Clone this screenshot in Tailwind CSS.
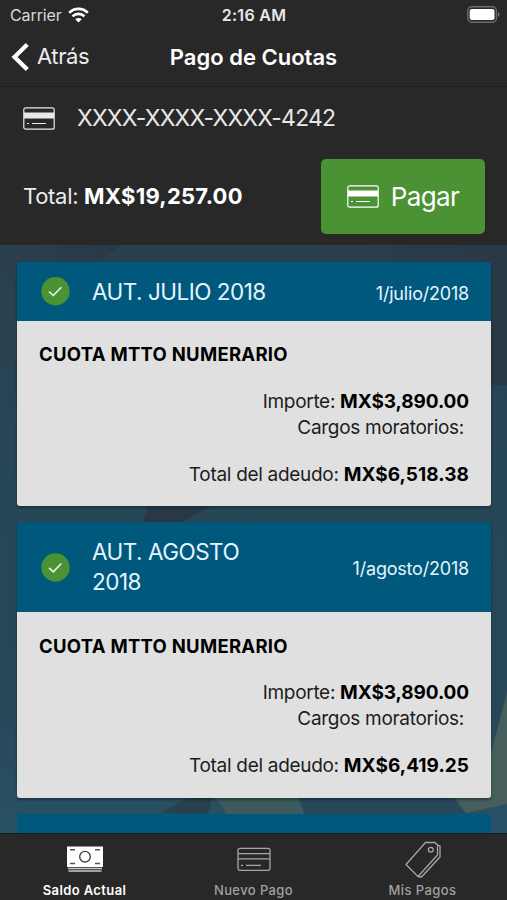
<!DOCTYPE html>
<html lang="es">
<head>
    <meta charset="UTF-8">
    <meta name="viewport" content="width=device-width, initial-scale=1.0">
    <title>Pago de Cuotas</title>
    <script src="https://cdn.jsdelivr.net/npm/@tailwindcss/browser@4"></script>
</head>
<body class="bg-[#282828] font-['Inter','Liberation_Sans',sans-serif] text-white">
    <!-- Shared icon -->
    <svg class="hidden">
        <symbol id="card" viewBox="0 0 32 23">
            <rect x="0.8" y="0.8" width="30.4" height="21.4" rx="2" fill="none" stroke="currentColor" stroke-width="1.2"/>
            <path d="M1 5.5h30v6H1z" fill="currentColor"/>
            <path d="M4 16.5h2M9 16.5h14" stroke="currentColor" stroke-width="1.2"/>
        </symbol>
    </svg>

    <div class="flex flex-col h-[900px] w-[507px] overflow-hidden">
        <!-- Status bar -->
        <div class="grid grid-cols-3 items-center h-[29px] shrink-0 pl-2.5 pr-[7px] text-[16px]">
            <div class="flex items-center gap-[6px] text-[#d8d8d8]">
                <span class="tracking-[-0.1px]">Carrier</span>
                <svg class="w-[21px] h-[16px]" viewBox="0 0 21 16" fill="none" stroke="#fff" stroke-width="2.7">
                    <path d="M1.2 5.8a13.2 13.2 0 0 1 18.6 0M4.5 9.4a8.5 8.5 0 0 1 12 0"/>
                    <path d="M10.5 15.5l-3.2-3.2a4.5 4.5 0 0 1 6.4 0z" fill="#fff" stroke="none"/>
                </svg>
            </div>
            <div class="pt-px pr-[2px] text-center font-semibold text-[16px] tracking-[0.3px] whitespace-nowrap text-[#e8e8e8]">2:16 AM</div>
            <svg class="w-[33px] h-[17px] justify-self-end" viewBox="0 0 33 17">
                <rect x="0.8" y="0.8" width="28.6" height="15.4" rx="4" fill="none" stroke="#6c6c6c" stroke-width="1.4"/>
                <rect x="2.7" y="2.9" width="24.8" height="11.2" rx="2" fill="#fff"/>
                <path d="M31 6q1.5 1 1.5 2.5T31 11z" fill="#777"/>
            </svg>
        </div>

        <!-- Nav bar -->
        <header class="grid grid-cols-[150px_1fr_150px] items-center h-[58px] shrink-0 border-b border-[#1f1f1f]">
            <a href="#" class="flex items-center gap-[8px] pl-[11px] pb-[2px] text-[22px]">
                <svg class="w-[18px] h-[28px]" viewBox="0 0 18 28" fill="none" stroke="#fff" stroke-width="4.2">
                    <path d="M16.3 1.5L3.5 14l12.8 12.5"/>
                </svg>
                <span class="tracking-[-0.4px] text-[#ececec]">Atrás</span>
            </a>
            <h1 class="text-center font-semibold text-[22px] whitespace-nowrap">Pago de Cuotas</h1>
        </header>

        <!-- Payment summary -->
        <section class="h-[158px] shrink-0">
            <div class="flex items-center h-[62px] pl-[23px] gap-[22px] text-[#e8e8e8]">
                <svg class="w-[32px] h-[23px]"><use href="#card"/></svg>
                <span class="text-[23px] tracking-[-0.8px]">XXXX-XXXX-XXXX-4242</span>
            </div>
            <div class="flex items-center justify-between h-[96px] pl-[23px] pr-[22px] pb-[2px]">
                <p class="text-[22px] tracking-[-0.3px] text-[#ececec]">Total: <strong class="font-bold tracking-[0.25px] text-white">MX$19,257.00</strong></p>
                <button class="flex items-center justify-center gap-[12px] w-[164px] h-[75px] rounded-[5px] bg-[#4a9234] text-[26px] tracking-[-0.6px]">
                    <svg class="w-[32px] h-[23px]"><use href="#card"/></svg>
                    <span>Pagar</span>
                </button>
            </div>
        </section>

        <!-- Fee list over a faceted backdrop -->
        <main class="relative grow min-h-0 overflow-hidden">
            <svg class="absolute inset-0 w-[507px] h-[589px]" viewBox="0 0 507 589">
                <defs>
                    <linearGradient id="bg" x2="0" y2="1">
                        <stop offset="0" stop-color="#2a3f4e"/>
                        <stop offset="0.4" stop-color="#274757"/>
                        <stop offset="0.8" stop-color="#28485a"/>
                        <stop offset="1" stop-color="#285264"/>
                    </linearGradient>
                    <linearGradient id="facet">
                        <stop offset="0" stop-color="#2a3b49" stop-opacity="0"/>
                        <stop offset="1" stop-color="#293845"/>
                    </linearGradient>
                </defs>
                <path d="M0 0h507v589H0z" fill="url(#bg)"/>
                <path d="M20 0h100L100 17H0z" fill="url(#facet)"/>
                <path d="M300 0h207v140h-40z" fill="url(#facet)"/>
                <path d="M148 262h62l-30 16h-37z" fill="#283845"/>
                <path d="M160 568l30-16h22l-4 18z" fill="#27414f"/>
                <path d="M216 552h82l7 18h-78z" fill="#3d5b5d"/>
                <path d="M298 552h155l13 18H305z" fill="#28485a"/>
                <path d="M466 568l41-9v30h-41z" fill="#285066"/>
                <path d="M507 447v112l-41 9-12-16h19l18-44z" fill="#465f5c"/>
            </svg>
            <div class="relative flex flex-col gap-4 pt-[17px] pl-[17px] pr-4">
                <article class="rounded-[3px] text-[#1d1d1d] shadow-[0_2px_3px_rgba(0,0,0,0.35)]">
                    <div class="flex items-center h-[59px] pl-6 pr-[22px] rounded-t-[3px] bg-[#00587c] text-[#e4f4ff]">
                        <svg class="w-[29px] h-[29px]" viewBox="0 0 29 29"><circle cx="14.5" cy="14.2" r="14.2" fill="#4a9234"/><path d="M8 14.5l4.3 4L20.3 10.2" fill="none" stroke="#e9f7e9" stroke-width="1.6"/></svg>
                        <h2 class="w-[190px] ml-[22px] text-[22.5px] leading-[30px] tracking-[-0.5px]">AUT. JULIO 2018</h2>
                        <time class="ml-auto pt-[3px] text-[18px] tracking-[-0.2px]">1/julio/2018</time>
                    </div>
                    <div class="h-[185px] px-[22px] pt-[20px] rounded-b-[3px] bg-[#e0e0e0] text-[19px] leading-[26px] tracking-[-0.3px]">
                        <h3 class="font-bold text-[18.5px] tracking-[0.27px] text-black">CUOTA MTTO NUMERARIO</h3>
                        <div class="mt-[22px] text-right">
                            <p>Importe: <strong class="font-bold tracking-[-0.1px] text-black">MX$3,890.00</strong></p>
                            <p class="pr-[5px]">Cargos moratorios:</p>
                            <p class="mt-[21px]">Total del adeudo: <strong class="font-bold tracking-[0.05px] text-black">MX$6,518.38</strong></p>
                        </div>
                    </div>
                </article>

                <article class="rounded-[3px] text-[#1d1d1d] shadow-[0_2px_3px_rgba(0,0,0,0.35)]">
                    <div class="flex items-center h-[90px] pl-6 pr-[22px] rounded-t-[3px] bg-[#00587c] text-[#e4f4ff]">
                        <svg class="w-[29px] h-[29px]" viewBox="0 0 29 29"><circle cx="14.5" cy="14.5" r="14.2" fill="#4a9234"/><path d="M8 14.8l4.3 4L20.3 10.5" fill="none" stroke="#e9f7e9" stroke-width="1.6"/></svg>
                        <h2 class="w-[190px] ml-[22px] text-[22.5px] leading-[30px] tracking-[-0.5px]">AUT. AGOSTO 2018</h2>
                        <time class="ml-auto pt-[3px] text-[18px] tracking-[-0.2px]">1/agosto/2018</time>
                    </div>
                    <div class="h-[186px] px-[22px] pt-[21px] rounded-b-[3px] bg-[#e0e0e0] text-[19px] leading-[26px] tracking-[-0.3px]">
                        <h3 class="font-bold text-[18.5px] tracking-[0.27px] text-black">CUOTA MTTO NUMERARIO</h3>
                        <div class="mt-[21px] text-right">
                            <p>Importe: <strong class="font-bold tracking-[-0.1px] text-black">MX$3,890.00</strong></p>
                            <p class="pr-[5px]">Cargos moratorios:</p>
                            <p class="mt-[21px]">Total del adeudo: <strong class="font-bold tracking-[0.05px] text-black">MX$6,419.25</strong></p>
                        </div>
                    </div>
                </article>

                <article class="h-[60px] rounded-t-[3px] bg-[#00587c]"></article>
            </div>
        </main>

        <!-- Tab bar -->
        <nav class="grid grid-cols-3 h-[67px] shrink-0 border-t border-[#1c1c1c] bg-[#282828] text-[13px] tracking-[0.4px] text-[#a0a0a0]">
            <a href="#" class="flex flex-col items-center text-white">
                <svg class="w-[38px] h-[40px] mt-[6px]" viewBox="0 0 38 40">
                    <path d="M1 6.5h36v20.5H1z" fill="#fff"/>
                    <path d="M2 28.5h34M2.5 31h33" stroke="#ccc" stroke-width="1.5"/>
                    <circle cx="19" cy="16.7" r="5.3" fill="none" stroke="#444" stroke-width="1.4"/>
                    <path d="M4 9.8h5M29 9.8h5M4 23.5h5M29 23.5h5" stroke="#555" stroke-width="1.4"/>
                </svg>
                <span class="mt-[1px] font-semibold">Saldo Actual</span>
            </a>
            <a href="#" class="flex flex-col items-center">
                <svg class="w-[36px] h-[40px] mt-[6px]" viewBox="0 0 36 40" fill="none" stroke="#a6a6a6" stroke-width="1.3">
                    <rect x="2" y="8.3" width="32" height="22" rx="2"/>
                    <path d="M2 13.7h32M2 18.8h32M5 25.3h2M10 25.3h15"/>
                </svg>
                <span class="mt-[1px] font-medium">Nuevo Pago</span>
            </a>
            <a href="#" class="flex flex-col items-center">
                <svg class="w-[38px] h-[40px] mt-[6px]" viewBox="0 0 38 40" fill="none" stroke="#a6a6a6" stroke-width="1.3" stroke-linejoin="round">
                    <path d="M21.5 2.5L2 24.5l12 12L33.5 15V5l-2.5-2.5z"/>
                    <path d="M33.5 5l2.5.8V17L17.5 37l-3.5-.5"/>
                    <circle cx="26.8" cy="9.8" r="2.4"/>
                </svg>
                <span class="mt-[1px] font-medium">Mis Pagos</span>
            </a>
        </nav>
    </div>
</body>
</html>
